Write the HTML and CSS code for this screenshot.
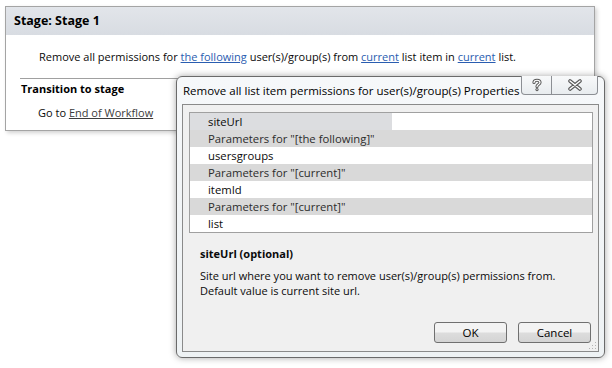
FILE: index.html
```html
<!DOCTYPE html>
<html lang="en">
<head>
    <meta charset="UTF-8">
    <title>Stage 1</title>
    <link rel="stylesheet" href="styles.css">
</head>
<body>
    <!-- Workflow stage -->
    <div class="stage">
        <div class="stage-head">Stage: Stage 1</div>
        <div class="action">
            Remove all permissions for <a href="#">the following</a> user(s)/group(s) from <a href="#">current</a> list item in <a href="#">current</a> list.
        </div>
        <div class="transition">
            <div class="transition-title">Transition to stage</div>
            <div class="goto">Go to <a href="#" class="dark">End of Workflow</a></div>
        </div>
    </div>

    <!-- Properties dialog -->
    <div class="dialog">
        <div class="dialog-title">Remove all list item permissions for user(s)/group(s) Properties</div>
        <div class="caption-buttons">
            <div class="cap-btn help">
                <svg width="12" height="14" viewBox="0 0 12 14">
                    <path d="M3 4.5 C3 1.5 9 1.5 9 4.5 C9 6.5 6 6.5 6 8.5" fill="none" stroke="#5a5a5a" stroke-width="3.2" stroke-linecap="round"/>
                    <circle cx="6" cy="11.6" r="1.6" fill="#5a5a5a"/>
                    <path d="M3 4.5 C3 1.5 9 1.5 9 4.5 C9 6.5 6 6.5 6 8.5" fill="none" stroke="#fff" stroke-width="1.2" stroke-linecap="round"/>
                    <circle cx="6" cy="11.6" r="0.6" fill="#fff"/>
                </svg>
            </div>
            <div class="cap-btn close">
                <svg width="16" height="12" viewBox="0 0 16 12">
                    <path d="M3 2 L13 10 M13 2 L3 10" stroke="#5a5a5a" stroke-width="3.6" stroke-linecap="round"/>
                    <path d="M3 2 L13 10 M13 2 L3 10" stroke="#fff" stroke-width="1.4" stroke-linecap="round"/>
                </svg>
            </div>
        </div>
        <div class="client">
            <div class="grid">
                <div class="row">
                    <div class="cell name selected">siteUrl</div>
                    <div class="cell value"></div>
                </div>
                <div class="row category">Parameters for "[the following]"</div>
                <div class="row">
                    <div class="cell name">usersgroups</div>
                    <div class="cell value"></div>
                </div>
                <div class="row category">Parameters for "[current]"</div>
                <div class="row">
                    <div class="cell name">itemId</div>
                    <div class="cell value"></div>
                </div>
                <div class="row category">Parameters for "[current]"</div>
                <div class="row">
                    <div class="cell name">list</div>
                    <div class="cell value"></div>
                </div>
            </div>
            <div class="help-text">
                <div class="help-title">siteUrl (optional)</div>
                <p>Site url where you want to remove user(s)/group(s) permissions from.<br>Default value is current site url.</p>
            </div>
            <div class="buttons">
                <button>OK</button>
                <button>Cancel</button>
            </div>
            <svg class="grip" width="9" height="9" viewBox="0 0 9 9">
                <rect x="7" y="1" width="1" height="1" fill="#b5b5b5"/>
                <rect x="4" y="4" width="1" height="1" fill="#b5b5b5"/>
                <rect x="7" y="4" width="1" height="1" fill="#b5b5b5"/>
                <rect x="1" y="7" width="1" height="1" fill="#b5b5b5"/>
                <rect x="4" y="7" width="1" height="1" fill="#b5b5b5"/>
                <rect x="7" y="7" width="1" height="1" fill="#b5b5b5"/>
            </svg>
        </div>
    </div>
</body>
</html>
```

FILE: styles.css
```css
body {
    font-family: "Segoe UI", "Open Sans", Arial, sans-serif;
    font-size: 11px;
    color: #0a0a0a;
    margin: 0;
    padding: 0;
    background: #fff;
    position: relative;
    width: 612px;
    height: 368px;
    overflow: hidden;
}
a {
    color: #2a5db0;
    text-decoration: underline;
}
a.dark {
    color: #3c3c3c;
}
.stage {
    margin: 6px 0 0 5px;
    width: 588px;
    height: 123px;
    border: 1px solid #a4a4a4;
    box-shadow: 2px 2px 4px rgba(0, 0, 0, 0.18);
}
.stage-head {
    height: 28px;
    line-height: 28px;
    padding-left: 8px;
    font-size: 12.5px;
    font-weight: bold;
    color: #000;
    background: linear-gradient(#e2e5ea, #d8dce2);
}
.action {
    padding: 14px 0 0 33px;
    height: 29px;
    line-height: 16px;
}
.transition {
    margin: 0 0 0 14px;
    border-top: 1px solid #a0a0a0;
    padding-top: 1px;
}
.transition-title {
    font-weight: bold;
    color: #000;
    padding-left: 1px;
    height: 17px;
    line-height: 17px;
}
.goto {
    padding: 8px 0 0 18px;
    line-height: 16px;
}
.dialog {
    position: absolute;
    left: 176px;
    top: 76px;
    width: 417px;
    height: 275px;
    border: 1px solid #6a6a6a;
    border-radius: 6px;
    background: linear-gradient(#f6f8fa, #eef2f4);
    box-shadow: 0 0 7px rgba(0, 0, 0, 0.35);
    padding: 0 5px 5px 5px;
    display: flex;
    flex-direction: column;
}
.dialog-title {
    height: 27px;
    line-height: 27px;
    padding-left: 1px;
    font-size: 11.5px;
    color: #000;
}
.caption-buttons {
    position: absolute;
    top: -1px;
    right: 6px;
    display: flex;
}
.cap-btn {
    height: 18px;
    border: 1px solid #8c8f94;
    border-top: none;
    background: linear-gradient(#f8f9fa, #e8ecef);
    display: flex;
    align-items: center;
    justify-content: center;
}
.help {
    width: 29px;
    border-radius: 0 0 0 4px;
}
.close {
    width: 45px;
    border-left: none;
    border-radius: 0 0 4px 0;
}
.client {
    flex: 1;
    border: 1px solid #8a8a8a;
    background: #f0f0f0;
    padding: 7px 5px 0 6px;
    position: relative;
    display: flex;
    flex-direction: column;
}
.grid {
    border: 1px solid #a0a0a0;
    background: #fff;
    font-size: 11.3px;
}
.row {
    height: 17px;
    line-height: 17px;
    display: flex;
}
.category {
    background: #d9d9d9;
    padding-left: 18px;
    color: #2c2c2c;
}
.cell.name {
    width: 184px;
    padding-left: 18px;
}
.cell.selected {
    background: #dcdde0;
}
.cell.value {
    flex: 1;
}
.help-text {
    padding: 13px 0 0 11px;
}
.help-title {
    font-weight: bold;
    line-height: 16px;
}
.help-text p {
    margin: 6px 0 0 0;
    line-height: 15px;
}
.buttons {
    margin-top: auto;
    padding: 0 2px 8px 0;
    display: flex;
    justify-content: flex-end;
    gap: 11px;
}
button {
    font-family: inherit;
    font-size: 11.5px;
    width: 73px;
    height: 21px;
    padding: 0;
    border: 1px solid #707070;
    border-radius: 3px;
    background: linear-gradient(#f3f3f3 45%, #dcdcdc 55%, #d4d4d4);
    color: #000;
}
.grip {
    position: absolute;
    right: 1px;
    bottom: 1px;
}
```
